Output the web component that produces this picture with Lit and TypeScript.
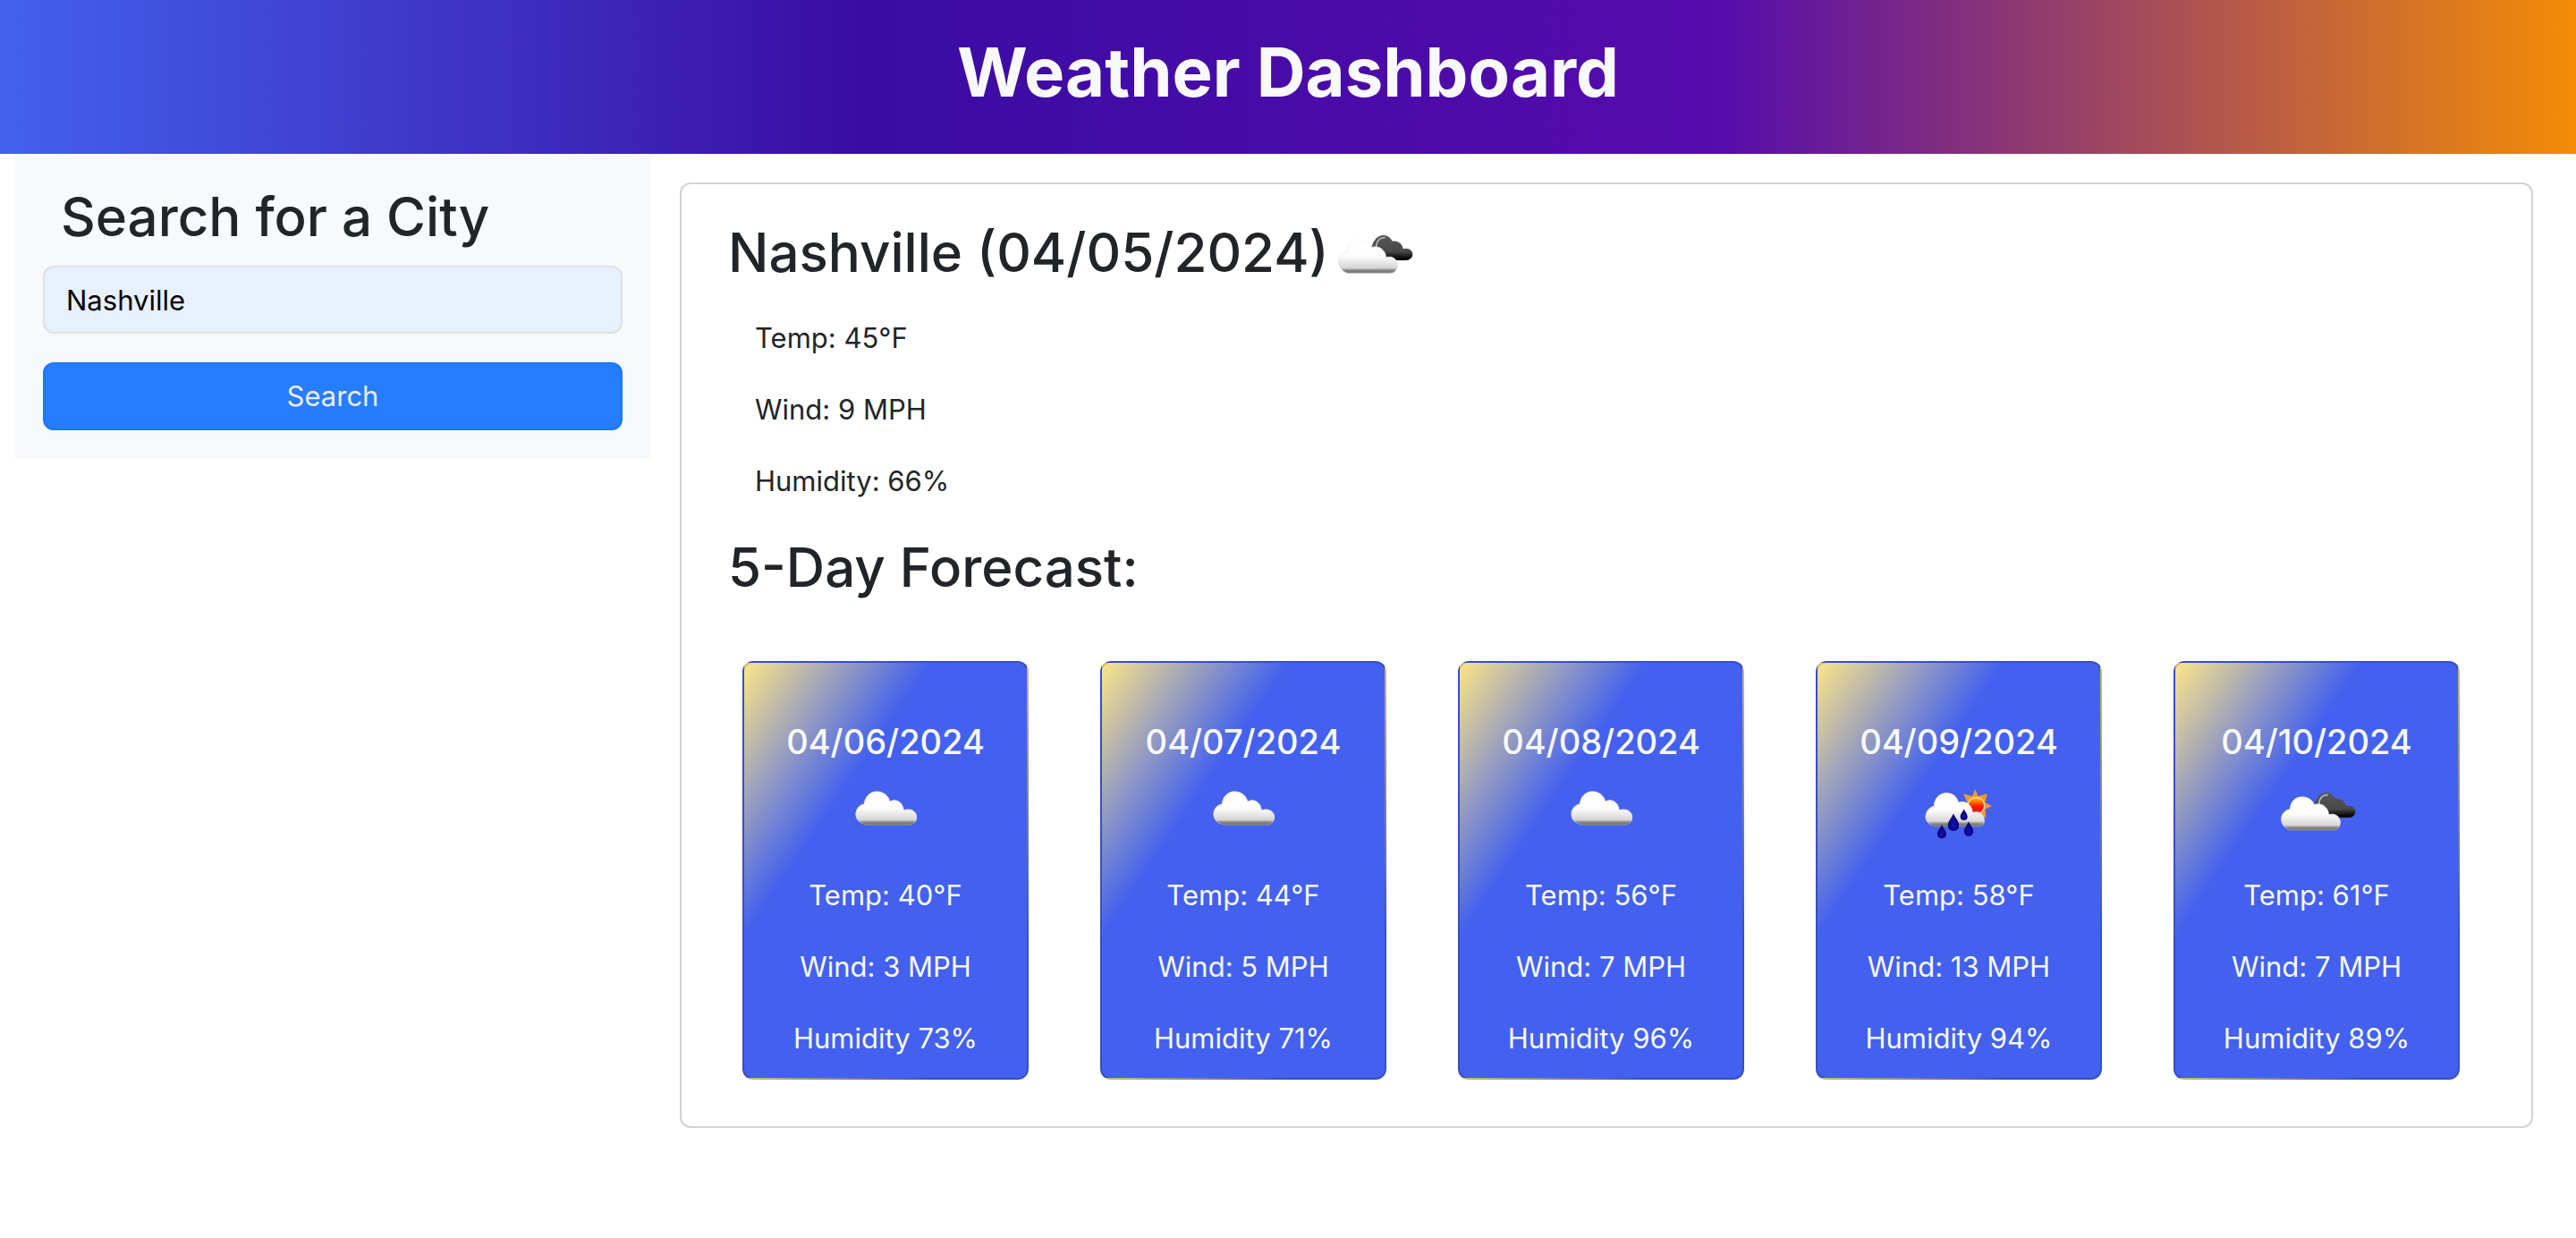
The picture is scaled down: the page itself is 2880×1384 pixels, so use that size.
import { LitElement, html, css, svg } from "lit";
import { customElement, property, state } from "lit/decorators.js";

type Sky = "clouds" | "broken" | "rain";

interface Day {
  date: string;
  sky: Sky;
  temp: number;
  wind: number;
  humidity: number;
}

const LABELS: Record<Sky, string> = {
  clouds: "Scattered clouds",
  broken: "Broken clouds",
  rain: "Rain and sun",
};

const TODAY: Day = { date: "04/05/2024", sky: "broken", temp: 45, wind: 9, humidity: 66 };

const FORECAST: Day[] = [
  { date: "04/06/2024", sky: "clouds", temp: 40, wind: 3, humidity: 73 },
  { date: "04/07/2024", sky: "clouds", temp: 44, wind: 5, humidity: 71 },
  { date: "04/08/2024", sky: "clouds", temp: 56, wind: 7, humidity: 96 },
  { date: "04/09/2024", sky: "rain", temp: 58, wind: 13, humidity: 94 },
  { date: "04/10/2024", sky: "broken", temp: 61, wind: 7, humidity: 89 },
];

@customElement("weather-icon")
export class WeatherIcon extends LitElement {
  @property() sky: Sky = "clouds";

  static styles = css`
    :host { display: inline-block; width: 100px; height: 100px; }
    .art { display: block; width: 100%; height: 100%; }
  `;

  private cloud(d: string) {
    return svg`<path fill="url(#white)" stroke="url(#edge)" stroke-width="3" d=${d}/>`;
  }

  private drop(x: number, y: number, s: number) {
    return svg`<path transform="translate(${x} ${y}) scale(${s})" fill="url(#drop)"
      d="M0 0C1 4 6 8 6 13A6 6 0 0 1-6 13C-6 8-1 4 0 0Z"/>`;
  }

  private scene() {
    if (this.sky === "clouds") {
      return this.cloud("M205 216C180 212 169 193 171 177C173 160 185 149 199 147C201 121 220 105 240 105C262 105 280 118 284 139C305 127 328 140 331 168C352 159 374 171 374 190C374 205 365 215 352 216Z");
    }
    if (this.sky === "broken") {
      return svg`
        <path fill="url(#dark)" d="M262 150C268 125 282 108 302 108C315 108 326 116 332 128C350 124 366 136 368 154C384 148 400 158 400 172C400 184 390 192 378 192H308Z"/>
        <path fill="none" stroke="#b4b6ba" stroke-width="5" d="M278 148C278 128 290 114 308 116"/>
        ${this.cloud("M182 234C161 228 151 211 152 195C153 178 165 167 181 164C183 139 198 123 220 123C240 123 255 132 262 149C285 141 308 155 311 183C330 175 349 188 349 208C349 222 340 234 325 234Z")}`;
    }
    return svg`
      <path fill="#f49a2c" d="M325 97L335 121L365 112L358 142L381 153L358 164L362 192L340 184L300 160L298 140L285 112L315 121Z"/>
      <circle cx="328" cy="152" r="30" fill="#f7d9a0"/>
      <circle cx="328" cy="152" r="26" fill="url(#sun)"/>
      ${this.cloud("M192 221C170 218 158 203 159 187C161 170 172 157 187 154C188 128 205 110 228 110C250 110 264 122 268 142C292 133 314 148 316 176C338 167 355 181 355 202C355 214 349 221 338 221Z")}
      ${this.drop(252, 178, 3.1)} ${this.drop(287, 163, 2)}
      ${this.drop(303, 205, 2.6)} ${this.drop(213, 215, 2.5)}`;
  }

  render() {
    return html`
      <svg class="art" viewBox="120 15 300 300" role="img" aria-label=${LABELS[this.sky]}>
        <defs>
          <linearGradient id="white" x1="0" y1="0" x2="0" y2="1">
            <stop offset="0" stop-color="#fff"/>
            <stop offset="0.5" stop-color="#fdfdfd"/>
            <stop offset="0.85" stop-color="#d6d6d6"/>
            <stop offset="0.93" stop-color="#808080"/>
            <stop offset="1" stop-color="#767676"/>
          </linearGradient>
          <linearGradient id="edge" x1="0" y1="0" x2="0" y2="1">
            <stop offset="0" stop-color="#f6f6f6"/>
            <stop offset="0.85" stop-color="#dedede"/>
            <stop offset="1" stop-color="#8c8c8c"/>
          </linearGradient>
          <linearGradient id="dark" x1="0" y1="0" x2="0" y2="1">
            <stop offset="0" stop-color="#585858"/>
            <stop offset="0.65" stop-color="#484848"/>
            <stop offset="0.95" stop-color="#000"/>
          </linearGradient>
          <linearGradient id="sun" x1="0" y1="0" x2="0" y2="1">
            <stop offset="0" stop-color="#ffc400"/>
            <stop offset="0.55" stop-color="#ff1a00"/>
            <stop offset="1" stop-color="#f00"/>
          </linearGradient>
          <radialGradient id="drop" cx="0.5" cy="0.65" r="0.6">
            <stop offset="0" stop-color="#1a10c8"/>
            <stop offset="1" stop-color="#00004a"/>
          </radialGradient>
        </defs>
        ${this.scene()}
      </svg>`;
  }
}

@customElement("forecast-card")
export class ForecastCard extends LitElement {
  @property({ attribute: false }) day!: Day;

  static styles = css`
    :host { display: block; }
    .card {
      box-sizing: border-box;
      display: flex;
      flex-direction: column;
      align-items: center;
      padding: 64px 0 4px;
      border: 2px solid rgba(0, 0, 0, 0.175);
      border-radius: 12px;
      background: linear-gradient(to bottom right, #fce588, #4361ee 33%);
      color: #f8f9fa;
    }
    .date { margin: 0; font-size: 38px; line-height: 48px; font-weight: 500; }
    .icon { margin: 2px 0 6px; }
    .fact { margin: 0; padding: 16px 0; line-height: 48px; }
  `;

  render() {
    const d = this.day;
    return html`
      <article class="card">
        <h3 class="date">${d.date}</h3>
        <weather-icon class="icon" .sky=${d.sky}></weather-icon>
        <p class="fact">Temp: ${d.temp}°F</p>
        <p class="fact">Wind: ${d.wind} MPH</p>
        <p class="fact">Humidity ${d.humidity}%</p>
      </article>`;
  }
}

@customElement("app-root")
export class AppRoot extends LitElement {
  @state() private city = "Nashville";

  static styles = css`
    :host {
      display: block;
      font-family: Inter, "Liberation Sans", sans-serif;
      font-size: 31px;
      line-height: 48px;
      color: #212529;
    }
    .banner {
      padding: 32px 16px 44px;
      background: linear-gradient(90deg, #4361ee, #3a0ca3, #560bad, #f48c06);
      color: #f8f9fa;
      text-align: center;
    }
    .title { margin: 0; font-size: 76px; line-height: 96px; font-weight: 700; }
    .layout {
      display: grid;
      grid-template-columns: 1fr 3fr;
      align-items: start;
      padding: 0 16px;
    }
    .search {
      display: flex;
      flex-direction: column;
      padding: 32px;
      background: #f8f9fa;
    }
    .heading { margin: 0; font-size: 60px; line-height: 77px; font-weight: 500; }
    .label { padding: 0 20px 16px; }
    .field, .submit {
      box-sizing: border-box;
      width: 100%;
      height: 76px;
      border-radius: 12px;
      font: inherit;
    }
    .field {
      padding: 12px 24px;
      border: 2px solid #dee2e6;
      background: #e8f0fe;
      color: #000;
    }
    .submit {
      margin-top: 32px;
      border: 2px solid #1a75ff;
      background: #267dff;
      color: #e9ecef;
    }
    .panel {
      margin: 32px;
      padding: 26px 52px 52px;
      border: 2px solid #d3d3d3;
      border-radius: 12px;
    }
    .now { display: flex; align-items: center; margin-bottom: 6px; }
    .fact { margin: 0; padding: 16px 30px; }
    .forecast { margin-top: 18px; }
    .cards {
      display: grid;
      grid-template-columns: repeat(5, 1fr);
      gap: 80px;
      padding: 66px 28px 0 16px;
    }
  `;

  private onInput(e: Event) {
    this.city = (e.target as HTMLInputElement).value;
  }

  render() {
    return html`
      <header class="banner"><h1 class="title">Weather Dashboard</h1></header>
      <main class="layout">
        <form class="search" @submit=${(e: Event) => e.preventDefault()}>
          <label class="heading label" for="city">Search for a City</label>
          <input class="field" id="city" type="text" .value=${this.city} @input=${this.onInput} />
          <button class="submit" type="submit">Search</button>
        </form>
        <section class="panel">
          <div class="now">
            <h2 class="heading">Nashville (${TODAY.date})</h2>
            <weather-icon .sky=${TODAY.sky}></weather-icon>
          </div>
          <p class="fact">Temp: ${TODAY.temp}°F</p>
          <p class="fact">Wind: ${TODAY.wind} MPH</p>
          <p class="fact">Humidity: ${TODAY.humidity}%</p>
          <h2 class="heading forecast">5-Day Forecast:</h2>
          <div class="cards">
            ${FORECAST.map((d) => html`<forecast-card .day=${d}></forecast-card>`)}
          </div>
        </section>
      </main>`;
  }
}
